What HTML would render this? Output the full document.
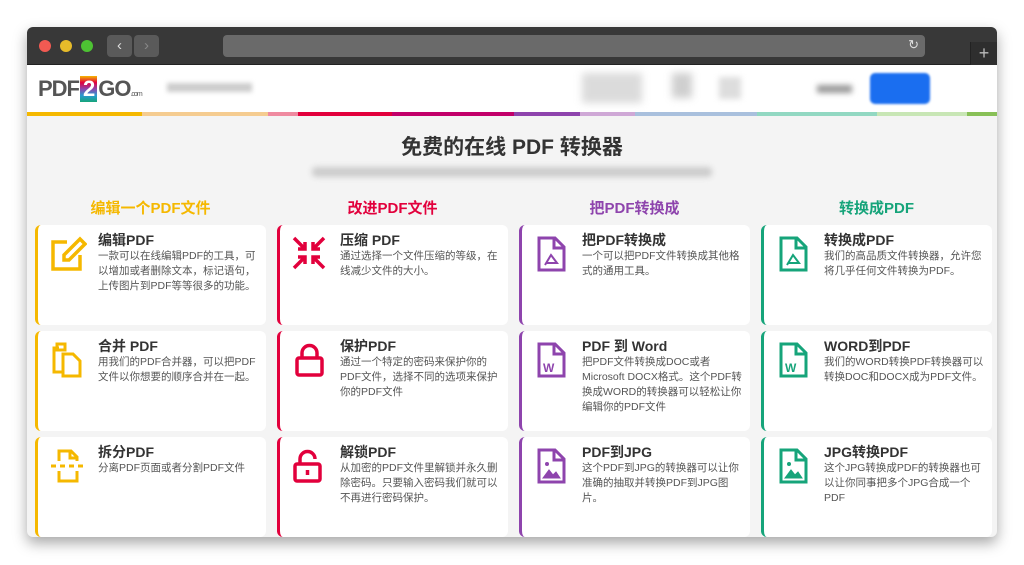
<!DOCTYPE html>
<html><head><meta charset="utf-8"><style>
*{margin:0;padding:0;box-sizing:border-box}
body{width:1024px;height:565px;background:#fff;font-family:"Liberation Sans","Noto Sans CJK SC",sans-serif;position:relative;overflow:hidden}
.win{position:absolute;left:27px;top:27px;width:970px;height:510px;background:#f4f4f4;border-radius:6px;overflow:hidden;box-shadow:0 6px 14px rgba(0,0,0,.35)}
.tb{position:absolute;left:0;top:0;width:970px;height:38px;background:#383838;border-bottom:1px solid #222}
.dot{position:absolute;top:13px;width:12px;height:12px;border-radius:50%}
.nb{position:absolute;top:8px;width:25px;height:22px;background:#5a5a5a;border-radius:4px;color:#ddd;font-size:15px;text-align:center;line-height:21px}
.url{position:absolute;left:196px;top:8px;width:702px;height:22px;background:#6a6a6a;border-radius:4px}
.plus{position:absolute;left:943px;top:15px;width:27px;height:23px;border-left:1px solid #222;background:#2e2e2e;color:#bbb;font-size:18px;text-align:center;line-height:22px}
.hdr{position:absolute;left:0;top:38px;width:970px;height:48px;background:#fff}
.stripe{position:absolute;top:85px;height:4px}
h1{position:absolute;left:0;width:970px;top:104px;text-align:center;font-size:21px;color:#333;font-weight:bold}
.sub{position:absolute;left:285px;top:140px;width:400px;height:10px;background:#ccc;filter:blur(3px);border-radius:4px}
.ct{position:absolute;top:170px;width:231px;text-align:center;font-size:15px;font-weight:bold}
.card{position:absolute;width:231px;height:100px;background:#fff;border-radius:6px;border-left:3px solid}
.card svg{position:absolute;left:11px;top:10px}
.card b{position:absolute;left:60px;top:5px;font-size:14px;color:#333}
.card p{position:absolute;left:60px;top:24px;width:167px;font-size:10.5px;line-height:15px;color:#555}
</style></head><body>
<div class="win">
<div class="tb">
<div class="dot" style="left:12px;background:#f25a52"></div>
<div class="dot" style="left:33px;background:#e6bb2a"></div>
<div class="dot" style="left:54px;background:#4dc233"></div>
<div class="nb" style="left:80px">‹</div><div class="nb" style="left:107px;color:#888">›</div>
<div class="url"><span style="position:absolute;right:6px;top:2px;color:#ddd;font-size:13px">↻</span></div>
<div class="plus">+</div>
</div>
<div class="hdr">
<div style="position:absolute;left:11px;top:11px;font-size:22px;font-weight:bold;color:#555;letter-spacing:-1px">PDF<span style="display:inline-block;background:linear-gradient(#f5b800,#e2003c,#8e44ad,#2a9bd0,#16a47a);color:#fff;padding:0 3px;margin:0 1px">2</span>GO<span style="font-size:7px;font-weight:normal">.com</span></div>
<div style="position:absolute;left:140px;top:18px;width:85px;height:9px;background:#ccc;filter:blur(2.5px)"></div>
<div style="position:absolute;left:555px;top:8px;width:60px;height:30px;background:#ccc;filter:blur(4px);opacity:.7"></div>
<div style="position:absolute;left:645px;top:8px;width:20px;height:25px;background:#bbb;filter:blur(4px);opacity:.7"></div>
<div style="position:absolute;left:692px;top:12px;width:22px;height:22px;background:#ddd;filter:blur(3px)"></div>
<div style="position:absolute;left:790px;top:20px;width:35px;height:8px;background:#999;filter:blur(3px)"></div>
<div style="position:absolute;left:843px;top:8px;width:60px;height:31px;background:#1a6ef0;border-radius:5px;filter:blur(1px)"></div>
</div>
<div class="stripe" style="left:0;width:115px;background:#f5b800"></div>
<div class="stripe" style="left:115px;width:126px;background:#f5cc90"></div>
<div class="stripe" style="left:241px;width:30px;background:#ef8aa0"></div>
<div class="stripe" style="left:271px;width:94px;background:#e2003c"></div>
<div class="stripe" style="left:365px;width:122px;background:#c2006a"></div>
<div class="stripe" style="left:487px;width:66px;background:#8e44ad"></div>
<div class="stripe" style="left:553px;width:55px;background:#cfa8d6"></div>
<div class="stripe" style="left:608px;width:122px;background:#a9c0dd"></div>
<div class="stripe" style="left:730px;width:120px;background:#92d8c2"></div>
<div class="stripe" style="left:850px;width:90px;background:#c8e6b5"></div>
<div class="stripe" style="left:940px;width:30px;background:#88c057"></div>
<h1>免费的在线 PDF 转换器</h1>
<div class="sub"></div>
<div class="ct" style="left:8px;color:#f5b800">编辑一个PDF文件</div>
<div class="ct" style="left:250px;color:#e2003c">改进PDF文件</div>
<div class="ct" style="left:492px;color:#8e44ad">把PDF转换成</div>
<div class="ct" style="left:734px;color:#16a47a">转换成PDF</div>

<div class="card" style="left:8px;top:198px;border-color:#f5b800"><svg width="38" height="38" viewBox="0 0 38 38" fill="none" stroke="#f5b800" stroke-width="3.5"><path d="M18 7H4v27h27V20"/><path d="M31 4l5 5-16 16h-5v-5z"/></svg><b>编辑PDF</b><p>一款可以在线编辑PDF的工具，可以增加或者删除文本，标记语句，上传图片到PDF等等很多的功能。</p></div>
<div class="card" style="left:250px;top:198px;border-color:#e2003c"><svg width="36" height="36" viewBox="0 0 36 36" fill="none" stroke="#e2003c" stroke-width="3.5"><path d="M3 3l11 11M7 14h7V7M33 3L22 14M29 14h-7V7M3 33l11-11M7 22h7v7M33 33L22 22M29 22h-7v7"/></svg><b>压缩 PDF</b><p>通过选择一个文件压缩的等级，在线减少文件的大小。</p></div>
<div class="card" style="left:492px;top:198px;border-color:#8e44ad"><svg width="36" height="38" viewBox="0 0 36 38" fill="none" stroke="#8e44ad" stroke-width="3"><path d="M6 3h16l9 9v23H6z"/><path d="M21 3v10h10"/><path d="M12 30l6-10 6 8h-11" stroke-width="2"/></svg><b>把PDF转换成</b><p>一个可以把PDF文件转换成其他格式的通用工具。</p></div>
<div class="card" style="left:734px;top:198px;border-color:#16a47a"><svg width="36" height="38" viewBox="0 0 36 38" fill="none" stroke="#16a47a" stroke-width="3"><path d="M6 3h16l9 9v23H6z"/><path d="M21 3v10h10"/><path d="M12 30l6-10 6 8h-11" stroke-width="2"/></svg><b>转换成PDF</b><p>我们的高品质文件转换器，允许您将几乎任何文件转换为PDF。</p></div>

<div class="card" style="left:8px;top:304px;border-color:#f5b800"><svg width="36" height="38" viewBox="0 0 36 38" fill="none" stroke="#f5b800" stroke-width="3"><path d="M10 7H5v24h8"/><rect x="8" y="3" width="8" height="6"/><path d="M14 13h10l7 7v15H14z"/></svg><b>合并 PDF</b><p>用我们的PDF合并器，可以把PDF文件以你想要的顺序合并在一起。</p></div>
<div class="card" style="left:250px;top:304px;border-color:#e2003c"><svg width="36" height="38" viewBox="0 0 36 38" fill="none" stroke="#e2003c" stroke-width="3.5"><rect x="6" y="17" width="25" height="17" rx="2"/><path d="M11 17v-5a7.5 7.5 0 0 1 15 0v5"/></svg><b>保护PDF</b><p>通过一个特定的密码来保护你的PDF文件，选择不同的选项来保护你的PDF文件</p></div>
<div class="card" style="left:492px;top:304px;border-color:#8e44ad"><svg width="36" height="38" viewBox="0 0 36 38" fill="none" stroke="#8e44ad" stroke-width="3"><path d="M6 3h16l9 9v23H6z"/><path d="M21 3v10h10"/><text x="10" y="31" font-size="12" font-weight="bold" fill="#8e44ad" stroke="none" font-family="Liberation Sans">W</text></svg><b>PDF 到 Word</b><p>把PDF文件转换成DOC或者 Microsoft DOCX格式。这个PDF转换成WORD的转换器可以轻松让你编辑你的PDF文件</p></div>
<div class="card" style="left:734px;top:304px;border-color:#16a47a"><svg width="36" height="38" viewBox="0 0 36 38" fill="none" stroke="#16a47a" stroke-width="3"><path d="M6 3h16l9 9v23H6z"/><path d="M21 3v10h10"/><text x="10" y="31" font-size="12" font-weight="bold" fill="#16a47a" stroke="none" font-family="Liberation Sans">W</text></svg><b>WORD到PDF</b><p>我们的WORD转换PDF转换器可以转换DOC和DOCX成为PDF文件。</p></div>

<div class="card" style="left:8px;top:410px;border-color:#f5b800"><svg width="38" height="38" viewBox="0 0 38 38" fill="none" stroke="#f5b800" stroke-width="3"><path d="M10 14V4h12l6 6v4"/><path d="M21 4v7h7"/><path d="M2 19h5M11 19h5M20 19h5M29 19h5"/><path d="M10 24v10h18V24"/></svg><b>拆分PDF</b><p>分离PDF页面或者分割PDF文件</p></div>
<div class="card" style="left:250px;top:410px;border-color:#e2003c"><svg width="36" height="38" viewBox="0 0 36 38" fill="none" stroke="#e2003c" stroke-width="3.5"><rect x="4" y="17" width="25" height="17" rx="2"/><path d="M9 17v-5a7.5 7.5 0 0 1 15 0"/><path d="M16.5 23v5"/></svg><b>解锁PDF</b><p>从加密的PDF文件里解锁并永久删除密码。只要输入密码我们就可以不再进行密码保护。</p></div>
<div class="card" style="left:492px;top:410px;border-color:#8e44ad"><svg width="36" height="38" viewBox="0 0 36 38" fill="none" stroke="#8e44ad" stroke-width="3"><path d="M6 3h16l9 9v23H6z"/><path d="M21 3v10h10"/><path d="M10 31l6-8 4 5 3-3 4 6z" fill="#8e44ad" stroke-width="1"/><circle cx="14" cy="17" r="2" fill="#8e44ad" stroke="none"/></svg><b>PDF到JPG</b><p>这个PDF到JPG的转换器可以让你准确的抽取并转换PDF到JPG图片。</p></div>
<div class="card" style="left:734px;top:410px;border-color:#16a47a"><svg width="36" height="38" viewBox="0 0 36 38" fill="none" stroke="#16a47a" stroke-width="3"><path d="M6 3h16l9 9v23H6z"/><path d="M21 3v10h10"/><path d="M10 31l6-8 4 5 3-3 4 6z" fill="#16a47a" stroke-width="1"/><circle cx="14" cy="17" r="2" fill="#16a47a" stroke="none"/></svg><b>JPG转换PDF</b><p>这个JPG转换成PDF的转换器也可以让你同事把多个JPG合成一个PDF</p></div>
</div>
</body></html>
